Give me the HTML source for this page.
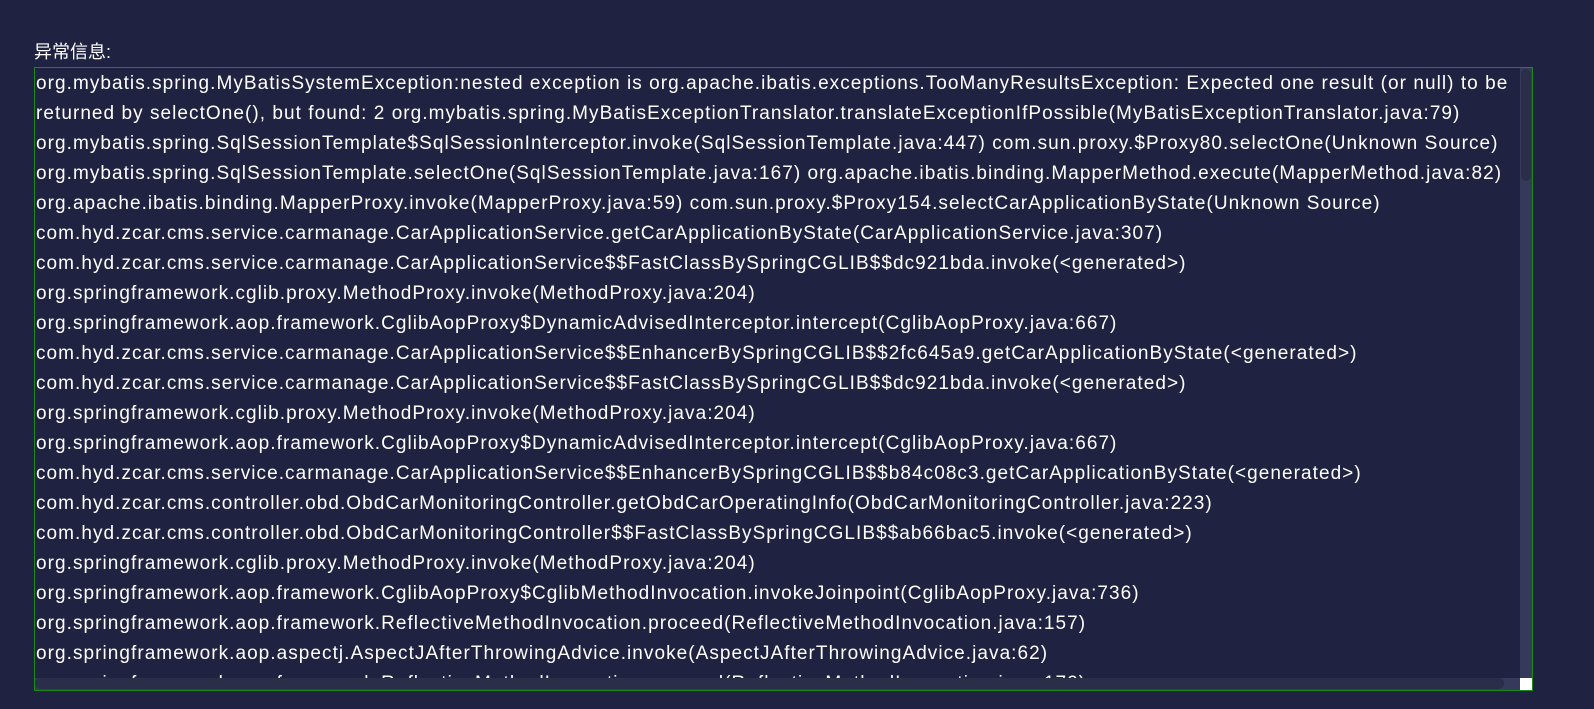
<!DOCTYPE html>
<html><head><meta charset="utf-8"><style>
html,body{margin:0;padding:0;background:#1f2240;width:1594px;height:709px;overflow:hidden;}
body{font-family:"Liberation Sans","Noto Sans CJK SC",sans-serif;color:#fff;}
.lbl{position:absolute;left:34px;top:41px;font-size:18px;line-height:22px;}
.box{position:absolute;left:34px;top:67px;width:1499px;height:624px;box-sizing:border-box;border:1px solid #1a8a1a;overflow:hidden;}
.txt{position:absolute;left:1px;top:1px;font-size:19px;letter-spacing:1.05px;line-height:30px;white-space:pre;}
.vs{position:absolute;right:0;top:0;width:12px;height:611px;background:#363a5a;}
.vt{position:absolute;right:1px;top:1px;width:10px;height:112px;background:#2b2e48;border-radius:5px;}
.hs{position:absolute;left:0;bottom:0;width:1485px;height:12px;background:#363a5a;}
.ht{position:absolute;left:0;bottom:1px;width:1469px;height:11px;background:#2b2e48;border-radius:5px;}
.cr{position:absolute;right:0;bottom:0;width:12px;height:12px;background:#fff;}
</style></head><body>
<div class="lbl">异常信息:</div>
<div class="box"><div class="txt">org.mybatis.spring.MyBatisSystemException:nested exception is org.apache.ibatis.exceptions.TooManyResultsException: Expected one result (or null) to be
returned by selectOne(), but found: 2 org.mybatis.spring.MyBatisExceptionTranslator.translateExceptionIfPossible(MyBatisExceptionTranslator.java:79)
org.mybatis.spring.SqlSessionTemplate$SqlSessionInterceptor.invoke(SqlSessionTemplate.java:447) com.sun.proxy.$Proxy80.selectOne(Unknown Source)
org.mybatis.spring.SqlSessionTemplate.selectOne(SqlSessionTemplate.java:167) org.apache.ibatis.binding.MapperMethod.execute(MapperMethod.java:82)
org.apache.ibatis.binding.MapperProxy.invoke(MapperProxy.java:59) com.sun.proxy.$Proxy154.selectCarApplicationByState(Unknown Source)
com.hyd.zcar.cms.service.carmanage.CarApplicationService.getCarApplicationByState(CarApplicationService.java:307)
com.hyd.zcar.cms.service.carmanage.CarApplicationService$$FastClassBySpringCGLIB$$dc921bda.invoke(&lt;generated&gt;)
org.springframework.cglib.proxy.MethodProxy.invoke(MethodProxy.java:204)
org.springframework.aop.framework.CglibAopProxy$DynamicAdvisedInterceptor.intercept(CglibAopProxy.java:667)
com.hyd.zcar.cms.service.carmanage.CarApplicationService$$EnhancerBySpringCGLIB$$2fc645a9.getCarApplicationByState(&lt;generated&gt;)
com.hyd.zcar.cms.service.carmanage.CarApplicationService$$FastClassBySpringCGLIB$$dc921bda.invoke(&lt;generated&gt;)
org.springframework.cglib.proxy.MethodProxy.invoke(MethodProxy.java:204)
org.springframework.aop.framework.CglibAopProxy$DynamicAdvisedInterceptor.intercept(CglibAopProxy.java:667)
com.hyd.zcar.cms.service.carmanage.CarApplicationService$$EnhancerBySpringCGLIB$$b84c08c3.getCarApplicationByState(&lt;generated&gt;)
com.hyd.zcar.cms.controller.obd.ObdCarMonitoringController.getObdCarOperatingInfo(ObdCarMonitoringController.java:223)
com.hyd.zcar.cms.controller.obd.ObdCarMonitoringController$$FastClassBySpringCGLIB$$ab66bac5.invoke(&lt;generated&gt;)
org.springframework.cglib.proxy.MethodProxy.invoke(MethodProxy.java:204)
org.springframework.aop.framework.CglibAopProxy$CglibMethodInvocation.invokeJoinpoint(CglibAopProxy.java:736)
org.springframework.aop.framework.ReflectiveMethodInvocation.proceed(ReflectiveMethodInvocation.java:157)
org.springframework.aop.aspectj.AspectJAfterThrowingAdvice.invoke(AspectJAfterThrowingAdvice.java:62)
org.springframework.aop.framework.ReflectiveMethodInvocation.proceed(ReflectiveMethodInvocation.java:172)</div>
<div class="vs"><div class="vt"></div></div>
<div class="hs"><div class="ht"></div></div>
<div class="cr"></div>
</div>
</body></html>
